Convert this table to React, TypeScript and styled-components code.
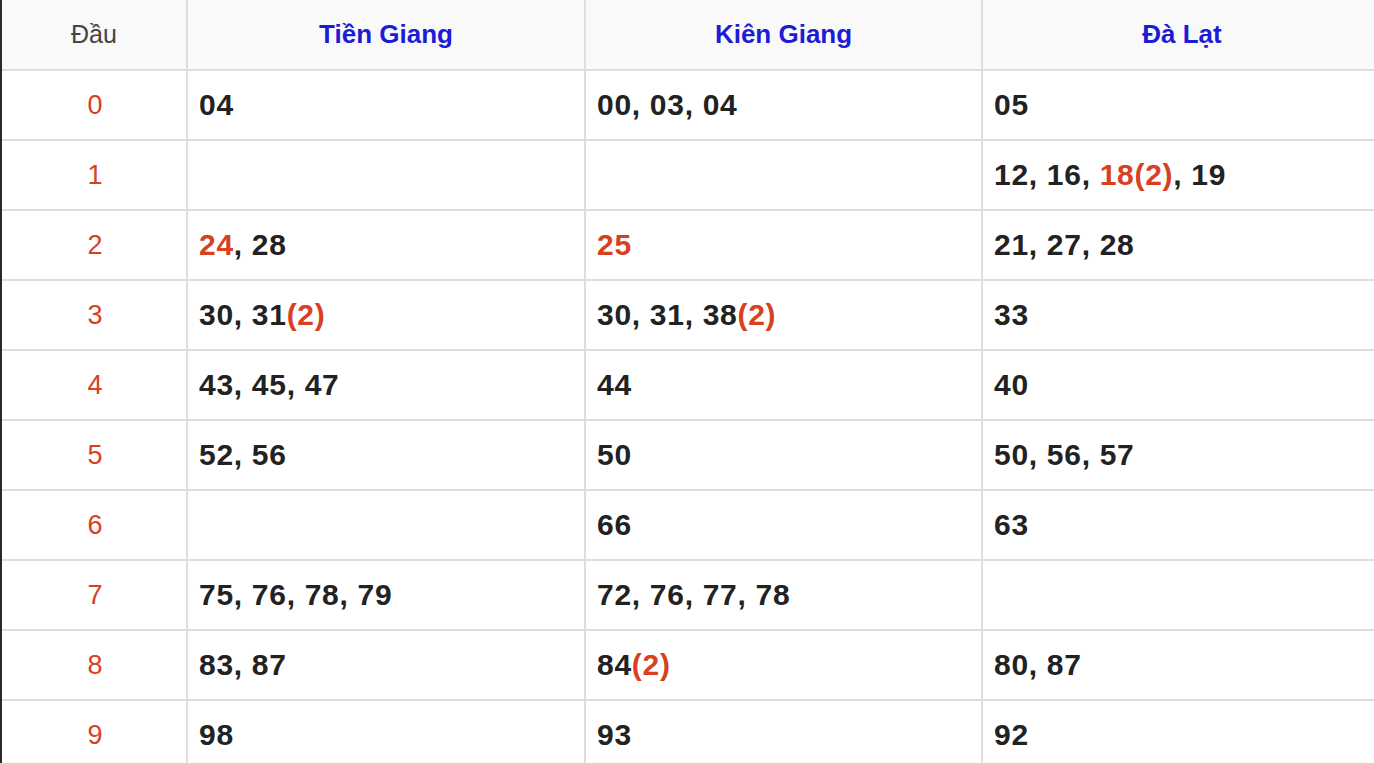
import React from "react";
import styled, { createGlobalStyle } from "styled-components";

const Global = createGlobalStyle`
  html, body { margin: 0; padding: 0; background: #fff; overflow: hidden; }
  body { font-family: "Liberation Sans", Arial, Helvetica, sans-serif; }
`;

const Page = styled.div`
  width: 1374px;
  height: 763px;
  overflow: hidden;
  border-left: 2px solid #2a2a2a;
  box-sizing: border-box;
`;

const Table = styled.table`
  border-collapse: collapse;
  table-layout: fixed;
  width: 1379px;
`;

const HeadCell = styled.th<{ $first?: boolean }>`
  height: 69px;
  padding: 0;
  background: #f9f9f9;
  border-right: 2px solid #dedede;
  border-bottom: 2px solid #dedede;
  text-align: center;
  vertical-align: middle;
  font-size: ${(p) => (p.$first ? 25 : 26)}px;
  font-weight: ${(p) => (p.$first ? 400 : 700)};
  color: ${(p) => (p.$first ? "#444" : "#1c1cd6")};
  &:last-child { border-right: none; }
`;

const HeadCol = styled.col<{ $w: number }>`
  width: ${(p) => p.$w}px;
`;

const Row = styled.tr``;

const KeyCell = styled.td`
  height: 68px;
  padding: 0 0 0 2px;
  border-right: 2px solid #dedede;
  border-bottom: 2px solid #dedede;
  text-align: center;
  vertical-align: middle;
  font-size: 27px;
  color: #d8401f;
`;

const ValueCell = styled.td`
  height: 68px;
  padding: 0 10px 0 11px;
  border-right: 2px solid #dedede;
  border-bottom: 2px solid #dedede;
  vertical-align: middle;
  font-size: 30px;
  font-weight: 700;
  letter-spacing: 0.7px;
  color: #222;
  white-space: nowrap;
  &:last-child { border-right: none; }
`;

const Hot = styled.span`
  color: #d8401f;
`;

type Item = { n: string; hot?: boolean; count?: number };

const parse = (s: string): Item[] =>
  s
    ? s.split(",").map((t) => {
        const x = t.trim();
        const m = x.match(/^(\*?)(\d+)(?:\((\d)\))?$/);
        return { n: m![2], hot: m![1] === "*", count: m![3] ? Number(m![3]) : undefined };
      })
    : [];

const data: [string, string, string][] = [
  ["04", "00, 03, 04", "05"],
  ["", "", "12, 16, *18(2), 19"],
  ["*24, 28", "*25", "21, 27, 28"],
  ["30, 31(2)", "30, 31, 38(2)", "33"],
  ["43, 45, 47", "44", "40"],
  ["52, 56", "50", "50, 56, 57"],
  ["", "66", "63"],
  ["75, 76, 78, 79", "72, 76, 77, 78", ""],
  ["83, 87", "84(2)", "80, 87"],
  ["98", "93", "92"],
];

const Values: React.FC<{ text: string }> = ({ text }) => {
  const items = parse(text);
  return (
    <>
      {items.map((it, i) => (
        <React.Fragment key={i}>
          {i > 0 && ", "}
          {it.hot ? (
            <Hot>
              {it.n}
              {it.count ? `(${it.count})` : ""}
            </Hot>
          ) : (
            <>
              {it.n}
              {it.count ? <Hot>({it.count})</Hot> : null}
            </>
          )}
        </React.Fragment>
      ))}
    </>
  );
};

export default function App() {
  return (
    <>
      <Global />
      <Page>
        <Table>
          <colgroup>
            <HeadCol $w={185} />
            <HeadCol $w={398} />
            <HeadCol $w={397} />
            <HeadCol $w={399} />
          </colgroup>
          <thead>
            <tr>
              <HeadCell $first>Đầu</HeadCell>
              <HeadCell>Tiền Giang</HeadCell>
              <HeadCell>Kiên Giang</HeadCell>
              <HeadCell>Đà Lạt</HeadCell>
            </tr>
          </thead>
          <tbody>
            {data.map((r, i) => (
              <Row key={i}>
                <KeyCell>{i}</KeyCell>
                {r.map((c, j) => (
                  <ValueCell key={j}>
                    <Values text={c} />
                  </ValueCell>
                ))}
              </Row>
            ))}
          </tbody>
        </Table>
      </Page>
    </>
  );
}
